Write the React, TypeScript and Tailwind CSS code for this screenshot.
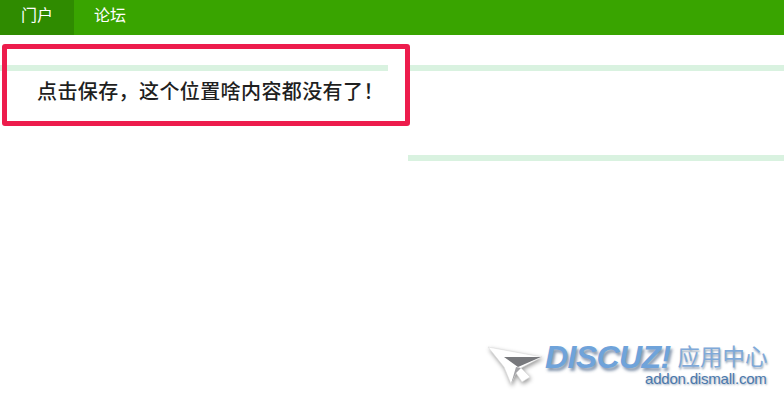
const CJK = "font-['Liberation_Sans','Noto_Sans_CJK_SC',sans-serif]";

const Watermark = () => {
	return (
		<div className="absolute top-[343px] left-[484px] flex items-start">
			<svg width="60" height="46" viewBox="0 0 60 46" className="drop-shadow-[1px_2px_2px_rgba(0,0,0,0.4)]">
				<path d="M4 4 L58 14 L37 25 L46 34 L38 39 L32 30 L27 41 L20 24 Z" fill="#fff" stroke="#dcdcdc" strokeWidth="0.6" />
				<path d="M20 14 L57 14 L34 24 Z" fill="#77787c" />
				<path d="M27 41 L32 24 L37 25 L32 30 Z" fill="#a2a2a6" />
			</svg>
			<div className="ml-[1px] flex w-[224px] flex-col">
				<div className="flex h-[29px] items-center whitespace-nowrap">
					<span className="font-['Liberation_Sans',sans-serif] text-[32px] leading-[29px] font-bold tracking-[-0.6px] text-[#6fa3da] italic [text-shadow:2px_3px_3px_rgba(40,70,110,0.55)]">
						DISCUZ!
					</span>
					<span className={`${CJK} ml-[7px] text-[22.5px] leading-[29px] text-[#7fa9d8] [text-shadow:1px_2px_2px_rgba(40,70,110,0.45)]`}>
						应用中心
					</span>
				</div>
				<div className="-mt-[2px] pl-[100px] font-['Liberation_Sans',sans-serif] text-[15px] leading-[17px] tracking-[-0.2px] whitespace-nowrap text-[#4a78ac] [text-shadow:1px_1px_2px_rgba(40,70,110,0.45)]">
					addon.dismall.com
				</div>
			</div>
		</div>
	);
};

export default function App() {
	return (
		<div className={`${CJK} relative h-[405px] w-[784px] overflow-hidden bg-white`}>
			<div className="flex h-[35px] bg-[#39a400] text-[16px] leading-[31px] text-white">
				<div className="h-full w-[74px] bg-[#2f8b00] pl-[21px]">门户</div>
				<div className="pl-[20px]">论坛</div>
			</div>

			<div className="flex">
				<div className="w-[408px] pt-[30px]">
					<div className="h-[6px] w-[388px] bg-[#d9f2e0]" />
				</div>
				<div className="flex-1 pt-[30px]">
					<div className="h-[6px] bg-[#d9f2e0]" />
					<div className="mt-[84px] h-[6px] bg-[#d9f2e0]" />
				</div>
			</div>

			<div className="absolute top-[44px] left-[2px] flex h-[82px] w-[408px] items-end rounded-[3px] border-[5px] border-[#ed1c4c]">
				<div className="pb-[17px] pl-[30px] text-[20px] leading-[24px] font-medium tracking-[0.4px] whitespace-nowrap text-[#1f1f1f]">
					点击保存，这个位置啥内容都没有了！
				</div>
			</div>

			<Watermark />
		</div>
	);
}
